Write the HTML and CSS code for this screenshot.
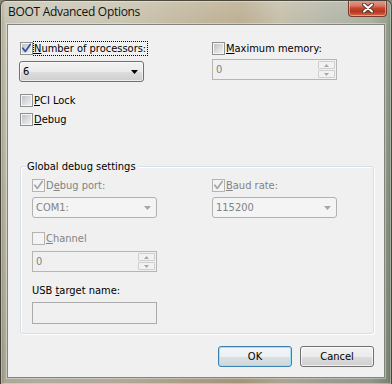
FILE: index.html
```html
<!DOCTYPE html>
<html>
<head>
<meta charset="utf-8">
<title>BOOT Advanced Options</title>
<link rel="stylesheet" href="styles.css">
</head>
<body>
<div class="window">
  <div class="titlebar">
    <span class="title">BOOT Advanced Options</span>
    <div class="close">
      <svg width="12" height="10" viewBox="0 0 12 10">
        <path d="M2 1.5 L10 8.5 M10 1.5 L2 8.5" stroke="#4a3a36" stroke-width="4" stroke-linecap="round"/>
        <path d="M2 1.5 L10 8.5 M10 1.5 L2 8.5" stroke="#ffffff" stroke-width="2" stroke-linecap="round"/>
      </svg>
    </div>
  </div>
  <div class="client">
    <div class="top">
      <div class="col col-left">
        <div class="chk">
          <span class="box"><svg class="mark" width="11" height="11" viewBox="0 0 11 11"><path d="M1.8 5.2 L4.3 8.4 L9.2 1.4"/></svg></span>
          <span class="lbl focus"><u>N</u>umber of processors:</span>
        </div>
        <div class="combo">
          <span class="val">6</span>
          <svg class="arrow" width="7" height="4" viewBox="0 0 7 4"><polygon points="0,0 7,0 3.5,4"/></svg>
        </div>
        <div class="chk gap-pci">
          <span class="box"></span>
          <span class="lbl"><u>P</u>CI Lock</span>
        </div>
        <div class="chk gap-dbg">
          <span class="box"></span>
          <span class="lbl"><u>D</u>ebug</span>
        </div>
      </div>
      <div class="col col-right">
        <div class="chk">
          <span class="box"></span>
          <span class="lbl"><u>M</u>aximum memory:</span>
        </div>
        <div class="spin">
          <span class="val">0</span>
          <span class="spinbtns">
            <span class="sbtn"><svg width="5" height="3" viewBox="0 0 5 3"><polygon points="0,3 5,3 2.5,0"/></svg></span>
            <span class="sbtn"><svg width="5" height="3" viewBox="0 0 5 3"><polygon points="0,0 5,0 2.5,3"/></svg></span>
          </span>
        </div>
      </div>
    </div>

    <fieldset class="group">
      <legend>Global debug settings</legend>
      <div class="grow">
        <div class="gcol">
          <div class="chk dis">
            <span class="box"><svg class="mark" width="11" height="11" viewBox="0 0 11 11"><path d="M1.8 5.2 L4.3 8.4 L9.2 1.4"/></svg></span>
            <span class="lbl">D<u>e</u>bug port:</span>
          </div>
          <div class="combo dis">
            <span class="val">COM1:</span>
            <svg class="arrow" width="7" height="4" viewBox="0 0 7 4"><polygon points="0,0 7,0 3.5,4"/></svg>
          </div>
          <div class="chk dis gap-chan">
            <span class="box"></span>
            <span class="lbl"><u>C</u>hannel</span>
          </div>
          <div class="spin gap-spin">
            <span class="val">0</span>
            <span class="spinbtns">
              <span class="sbtn"><svg width="5" height="3" viewBox="0 0 5 3"><polygon points="0,3 5,3 2.5,0"/></svg></span>
              <span class="sbtn"><svg width="5" height="3" viewBox="0 0 5 3"><polygon points="0,0 5,0 2.5,3"/></svg></span>
            </span>
          </div>
        </div>
        <div class="gcol">
          <div class="chk dis">
            <span class="box"><svg class="mark" width="11" height="11" viewBox="0 0 11 11"><path d="M1.8 5.2 L4.3 8.4 L9.2 1.4"/></svg></span>
            <span class="lbl"><u>B</u>aud rate:</span>
          </div>
          <div class="combo dis">
            <span class="val">115200</span>
            <svg class="arrow" width="7" height="4" viewBox="0 0 7 4"><polygon points="0,0 7,0 3.5,4"/></svg>
          </div>
        </div>
      </div>
      <div class="usb-label">USB <u>t</u>arget name:</div>
      <div class="edit"></div>
    </fieldset>

    <div class="buttons">
      <div class="btn default">OK</div>
      <div class="btn">Cancel</div>
    </div>
  </div>
</div>
</body>
</html>
```

FILE: styles.css
```css
* { box-sizing: border-box; }
html, body { margin: 0; padding: 0; }
body {
  width: 392px;
  height: 384px;
  overflow: hidden;
  background: #8d8a78;
  font-family: "DejaVu Sans Condensed", "DejaVu Sans", sans-serif;
  font-size: 11px;
  color: #000;
}
u { text-decoration: underline; text-underline-offset: 1px; }

.window {
  width: 392px;
  height: 384px;
  display: flex;
  flex-direction: column;
  border: 1px solid rgba(45, 45, 35, 0.75);
  border-bottom: none;
  border-radius: 6px 6px 0 0;
  background:
    linear-gradient(180deg, rgba(255,255,255,0.18) 0px, rgba(255,255,255,0.05) 24px, rgba(0,0,0,0.06) 60%, rgba(0,0,0,0.12) 100%),
    linear-gradient(90deg, #a89e86 0px, #c3bfae 4px, #c8c4b4 40px, #c7c1ad 120px, #bdb196 200px, #b8aa8c 240px, #c2bca6 280px, #b3b4a6 320px, #a5ab9c 370px, #8e9a86 386px, #6f7b68 392px);
  box-shadow: inset 0 0 0 1px rgba(255,255,255,0.35);
  overflow: hidden;
}

.titlebar {
  height: 23px;
  flex: none;
  display: flex;
  align-items: flex-start;
  padding-left: 7px;
}
.title {
  font-family: "Open Sans", "Noto Sans", sans-serif;
  font-size: 12px;
  letter-spacing: -0.3px;
  line-height: 16px;
  margin-top: 3px;
  color: #111;
}
.close {
  margin-left: auto;
  margin-right: 4px;
  margin-top: -1px;
  width: 39px;
  height: 17px;
  border: 1px solid #7a3a2c;
  border-top: none;
  border-radius: 0 0 4px 4px;
  background: linear-gradient(180deg, #e3a090 0%, #d67a68 35%, #c4452c 52%, #b8361c 72%, #d2694a 100%);
  box-shadow: inset 0 0 0 1px rgba(255,215,205,0.5);
  display: flex;
  align-items: center;
  justify-content: center;
}

.client {
  flex: none;
  margin: 0 6px;
  height: 354px;
  background: #f0f0f0;
  border: 1px solid rgba(60, 60, 50, 0.6);
  box-shadow: 0 0 0 1px rgba(255,255,255,0.35);
  display: flex;
  flex-direction: column;
}

.top {
  display: flex;
  padding: 16px 0 0 11px;
}
.col { display: flex; flex-direction: column; flex: none; }
.col-left { width: 193px; }
.col-left .chk { padding-left: 1px; }
.col-right { width: 125px; }

.chk {
  display: flex;
  align-items: center;
  height: 15px;
}
.box {
  width: 13px;
  height: 13px;
  flex: none;
  border: 1px solid #8e8f8f;
  background: linear-gradient(135deg, #b9bdc2 0%, #dcdee0 55%, #f3f3f4 100%);
  box-shadow: inset 0 0 0 1px #f6f6f6;
}
.mark { display: block; }
.mark path {
  fill: none;
  stroke: #3a549b;
  stroke-width: 1.8;
  stroke-linecap: round;
  stroke-linejoin: round;
}
.lbl {
  line-height: 13px;
  border: 1px solid transparent;
  padding: 0 1px 0 0;
  white-space: nowrap;
}
.lbl.focus { border: 1px dotted #000; }

.chk.dis .box {
  border-color: #b4b4b4;
  background: #f4f4f4;
  box-shadow: none;
}
.chk.dis .mark path { stroke: #a8a8a8; }
.chk.dis .lbl { color: #838383; }

.gap-pci { margin-top: 11px; }
.gap-dbg { margin-top: 4px; }

.combo {
  margin-top: 5px;
  width: 125px;
  height: 21px;
  border: 1px solid #707070;
  border-radius: 3px;
  background: linear-gradient(180deg, #f2f2f2 0%, #ebebeb 50%, #dddddd 51%, #cfcfcf 100%);
  box-shadow: inset 0 0 0 1px rgba(255,255,255,0.6);
  display: flex;
  align-items: center;
  padding: 0 5px 0 3px;
}
.combo .val { flex: 1; line-height: 13px; }
.combo .arrow { display: block; fill: #000; }
.combo.dis {
  margin-top: 4px;
  border-color: #adb2b5;
  background: #f4f4f4;
  box-shadow: none;
}
.combo.dis .val { color: #838383; }
.combo.dis .arrow { fill: #a6a6a6; }

.spin {
  margin-top: 3px;
  width: 125px;
  height: 21px;
  border: 1px solid #b5b5b5;
  background: #f0f0f0;
  display: flex;
  align-items: center;
  padding: 0 1px 0 3px;
}
.spin .val { flex: 1; color: #838383; line-height: 13px; }
.spinbtns {
  display: flex;
  flex-direction: column;
  gap: 1px;
  width: 17px;
}
.sbtn {
  height: 8px;
  border: 1px solid #cfcfcf;
  border-radius: 1px;
  background: #f2f2f2;
  display: flex;
  align-items: center;
  justify-content: center;
}
.sbtn svg { display: block; fill: #a8a8a8; }

.group {
  margin: 33px 0 0 12px;
  width: 354px;
  padding: 5px 11px 9px 11px;
  border: 1px solid #d5dfe5;
  border-radius: 3px;
  box-shadow: inset 1px 1px 0 #ffffff, 1px 1px 0 #ffffff;
  min-width: 0;
}
.group legend {
  margin-left: -6px;
  padding: 0 2px 0 1px;
  line-height: 13px;
  background: #f0f0f0;
}
.grow { display: flex; }
.gcol { display: flex; flex-direction: column; width: 180px; flex: none; }
.gcol + .gcol { width: 125px; }
.gap-chan { margin-top: 13px; }
.gap-spin { margin-top: 5px; }

.usb-label {
  margin-top: 12px;
  line-height: 13px;
}
.edit {
  margin-top: 5px;
  width: 125px;
  height: 22px;
  border: 1px solid #ababab;
  background: #f0f0f0;
}

.buttons {
  display: flex;
  justify-content: flex-end;
  gap: 8px;
  padding-right: 10px;
  margin-top: 12px;
}
.btn {
  width: 74px;
  height: 21px;
  border: 1px solid #707070;
  border-radius: 3px;
  background: linear-gradient(180deg, #f2f2f2 0%, #ebebeb 50%, #dddddd 51%, #cfcfcf 100%);
  box-shadow: inset 0 0 0 1px rgba(255,255,255,0.7);
  display: flex;
  align-items: center;
  justify-content: center;
  line-height: 13px;
}
.btn.default {
  border-color: #3c7fb1;
  box-shadow: inset 0 0 0 1px #9fe0f6;
  background: linear-gradient(180deg, #f3f7f9 0%, #ebf0f2 50%, #dae1e5 51%, #cfd8dd 100%);
}
```
